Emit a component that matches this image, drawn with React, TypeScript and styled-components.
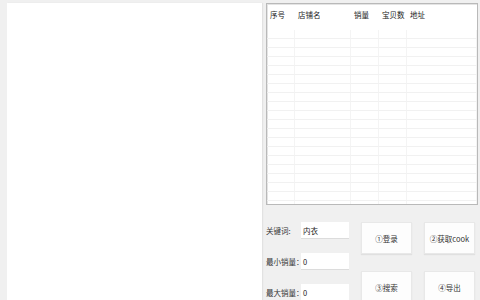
import styled, { createGlobalStyle } from 'styled-components'

const GlobalStyle = createGlobalStyle`
  html, body {
    margin: 0;
    padding: 0;
    background: #f0f0f0;
    overflow: hidden;
  }
  body {
    font-family: "Noto Sans CJK SC", "Liberation Sans", sans-serif;
    font-size: 7.5px;
    color: #333;
  }
`

const Window = styled.div`
  display: flex;
  width: 480px;
  height: 300px;
  padding: 3px 0 0 7px;
  box-sizing: border-box;
  gap: 4px;
  overflow: hidden;
`

const Canvas = styled.div`
  width: 255px;
  background: #fff;
  box-shadow: 1px 0 1px #e2e2e2;
`

const RightColumn = styled.div`
  display: flex;
  flex-direction: column;
  width: 212px;
`

const Table = styled.div`
  flex: none;
  height: 202px;
  background: #fff;
  border: 1px solid #b9b9b9;
  box-sizing: border-box;
  box-shadow: inset 1px 1px 0 #e4e4e4;
  overflow: hidden;
`

const HeaderRow = styled.div`
  display: grid;
  grid-template-columns: 28px 56px 28px 28px 1fr;
  height: 22px;
  align-items: center;
  padding-bottom: 4px;
`

const HeaderCell = styled.div`
  padding-left: 3px;
  line-height: 10px;
  white-space: nowrap;
  color: #222;
`

const Body = styled.div`
  display: grid;
  grid-template-columns: 28px 56px 28px 28px 1fr;
  grid-auto-rows: 9px;
`

const Cell = styled.div`
  border-right: 1px solid #f4f4f4;
  border-bottom: 1px solid #f1f1f1;
  box-sizing: border-box;
`

const Controls = styled.div`
  display: flex;
  margin-top: 17px;
  gap: 12px;
`

const Form = styled.div`
  display: flex;
  flex-direction: column;
  gap: 14px;
  width: 83px;
`

const FormRow = styled.div`
  display: flex;
  align-items: center;
  height: 17px;
`

const Label = styled.span`
  width: 35px;
  white-space: nowrap;
  line-height: 17px;
  color: #333;
`

const Input = styled.div`
  width: 48px;
  height: 17px;
  background: #fff;
  box-sizing: border-box;
  border-bottom: 1px solid #dcdcdc;
  padding-left: 2px;
  line-height: 17px;
  color: #222;
`

const Buttons = styled.div`
  display: grid;
  grid-template-columns: 51px 51px;
  grid-template-rows: 32px 32px;
  column-gap: 12px;
  row-gap: 17px;
`

const Button = styled.div`
  display: flex;
  align-items: center;
  justify-content: center;
  background: #fdfdfd;
  border: 1px solid #e8e8e8;
  box-sizing: border-box;
  box-shadow: 0 1px 1px #e0e0e0;
  white-space: nowrap;
  overflow: hidden;
  color: #333;
`

const columns = ['序号', '店铺名', '销量', '宝贝数', '地址']

export default function App() {
  const rows = Array.from({ length: 20 })
  return (
    <>
      <GlobalStyle />
      <Window>
        <Canvas />
        <RightColumn>
          <Table>
            <HeaderRow>
              {columns.map((c) => (
                <HeaderCell key={c}>{c}</HeaderCell>
              ))}
            </HeaderRow>
            <Body>
              {rows.map((_, r) =>
                columns.map((c) => <Cell key={r + c} />)
              )}
            </Body>
          </Table>
          <Controls>
            <Form>
              <FormRow>
                <Label>关键词:</Label>
                <Input>内衣</Input>
              </FormRow>
              <FormRow>
                <Label>最小销量：</Label>
                <Input>0</Input>
              </FormRow>
              <FormRow>
                <Label>最大销量：</Label>
                <Input>0</Input>
              </FormRow>
            </Form>
            <Buttons>
              <Button>①登录</Button>
              <Button>②获取cook</Button>
              <Button>③搜索</Button>
              <Button>④导出</Button>
            </Buttons>
          </Controls>
        </RightColumn>
      </Window>
    </>
  )
}
